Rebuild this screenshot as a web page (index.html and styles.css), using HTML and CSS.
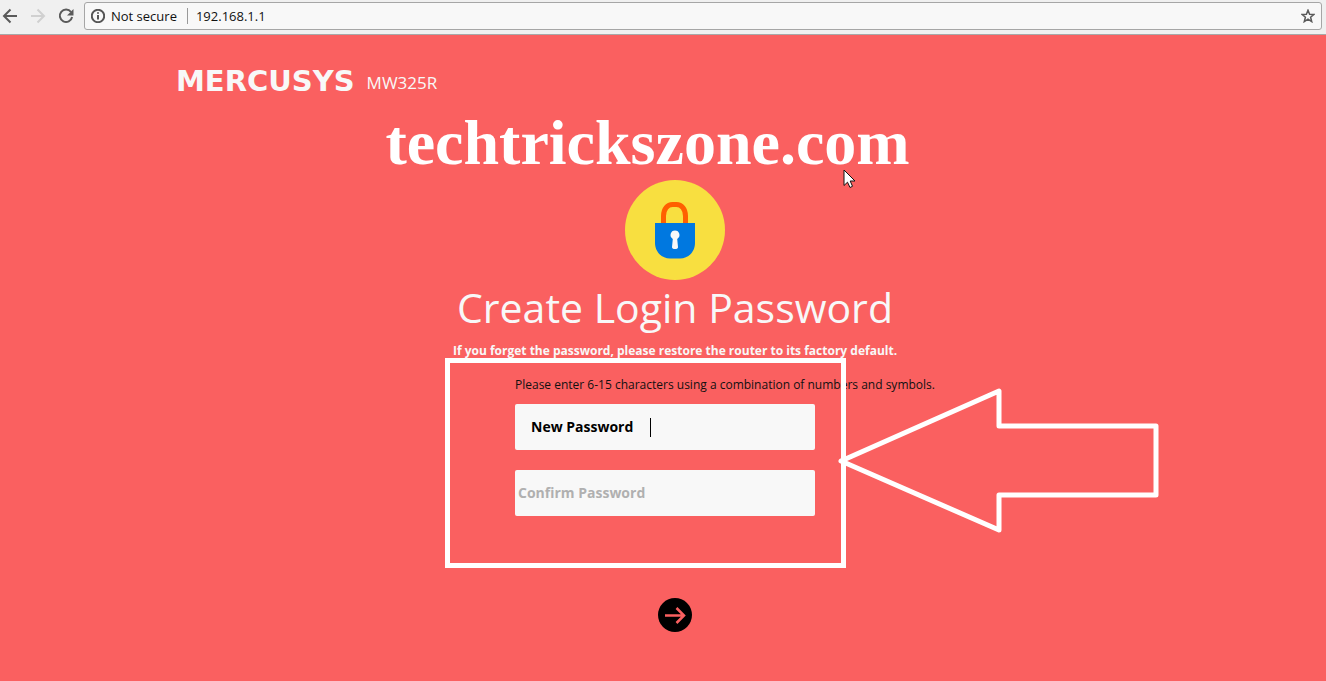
FILE: index.html
```
<!DOCTYPE html>
<html lang="en">
<head>
    <meta charset="utf-8">
    <title>MW325R</title>
    <link rel="stylesheet" href="styles.css">
</head>
<body>
    <div class="toolbar">
        <button class="nav-btn" type="button" aria-label="Back">
            <svg width="16" height="16" viewBox="0 0 16 16"><path d="M15 8H2.5M8.5 1.5L2 8l6.5 6.5"/></svg>
        </button>
        <button class="nav-btn disabled" type="button" aria-label="Forward" disabled>
            <svg width="16" height="16" viewBox="0 0 16 16"><path d="M1 8h12.5M7.500 1.500L14 8l-6.500 6.500"/></svg>
        </button>
        <button class="nav-btn" type="button" aria-label="Reload">
            <svg width="16" height="16" viewBox="0 0 16 16"><path d="M13 4A6.200 6.200 0 1 0 14.100 9"/><path class="solid" d="M15.500 1v6.500H9z"/></svg>
        </button>
        <div class="address-bar">
            <svg class="info" width="14" height="14" viewBox="0 0 14 14"><circle cx="7" cy="7" r="6.200"/><path d="M7 6v4.500M7 3.200v1.600"/></svg>
            <span class="security">Not secure</span>
            <input class="url" type="text" value="192.168.1.1" aria-label="Address">
            <button class="star" type="button" aria-label="Bookmark">
                <svg width="14" height="14" viewBox="0 0 14 14"><path d="M7 1.200l1.600 4 4.300.3-3.300 2.800 1.100 4.300L7 10.200l-3.700 2.400 1.100-4.300L1.100 5.500l4.300-.3z"/></svg>
            </button>
        </div>
    </div>

    <div class="page">
        <div class="header">
            <span class="logo">MERCUSYS</span>
            <span class="model">MW325R</span>
        </div>

        <div class="watermark">techtrickszone.com</div>

        <form class="login">
            <svg class="lock" width="100" height="100" viewBox="0 0 100 100">
                <circle cx="50" cy="50" r="50" fill="#f8df40"/>
                <path d="M38.500 45V36c0-7 4-11.500 9-11.500h4c5 0 9 4.500 9 11.500v9" fill="none" stroke="#ff5f00" stroke-width="5"/>
                <path d="M30 43h40v20c0 9-7 15.500-15 15.500H45c-8 0-15-6.500-15-15.500z" fill="#0078e0"/>
                <path d="M50 50.500a4.500 4.500 0 0 1 2.200 8.400L53 67a3 2 0 0 1-6 0l.8-8.100A4.500 4.500 0 0 1 50 50.500z" fill="#f8f8f8"/>
            </svg>
            <h1>Create Login Password</h1>
            <p class="note">If you forget the password, please restore the router to its factory default.</p>

            <div class="fields">
                <p class="hint">Please enter 6-15 characters using a combination of numbers and symbols.</p>
                <div class="field">
                    <input class="new-pwd" type="text" value="New Password" aria-label="New Password">
                    <span class="caret"></span>
                </div>
                <div class="field">
                    <input class="confirm-pwd" type="text" placeholder="Confirm Password" aria-label="Confirm Password">
                </div>
                <div class="highlight"></div>
                <svg class="arrow" width="322" height="146" viewBox="0 0 322 146">
                    <path d="M3 73L161 3v35h157v69H161v35z"/>
                </svg>
            </div>

            <button class="next" type="submit" aria-label="Next">
                <svg width="34" height="34" viewBox="0 0 34 34"><path d="M7 17.500h19M18.500 10l7.500 7.500-7.500 7.500"/></svg>
            </button>
        </form>

        <svg class="cursor" width="13" height="20" viewBox="0 0 13 20">
            <path d="M1 1v15.500l3.500-3.300L7 18.500l2.500-1.200L7.200 12H12z"/>
        </svg>
    </div>
</body>
</html>
```
FILE: styles.css
```
* {
    box-sizing: border-box;
}

body {
    margin: 0;
    min-height: 100vh;
    display: flex;
    flex-direction: column;
    background-color: #fa6060;
    color: #f8f8f8;
    font-family: "Open Sans", "Noto Sans", sans-serif;
}

button {
    padding: 0;
    border: none;
    background: none;
}

svg {
    display: block;
}

/* Browser toolbar */
.toolbar {
    display: flex;
    align-items: center;
    gap: 12px;
    height: 35px;
    padding: 0 4px 3px 2px;
    background-color: #f0f0f0;
    border-bottom: 1px solid #a8a8a8;
}

.nav-btn svg {
    fill: none;
    stroke: #5a5a5a;
    stroke-width: 2;
}

.nav-btn.disabled svg {
    stroke: #d0d0d0;
}

.nav-btn .solid {
    fill: #5a5a5a;
    stroke: none;
}

.address-bar {
    flex: 1;
    display: flex;
    align-items: center;
    height: 28px;
    margin-left: -2px;
    padding: 0 6px;
    border: 1px solid #a6a6a6;
    border-radius: 3px;
    background-color: #f8f8f8;
    color: #111111;
    font-size: 13px;
}

.info {
    fill: none;
    stroke: #555555;
    stroke-width: 2;
}

.security {
    margin-left: 6px;
    padding-right: 10px;
    border-right: 1px solid #999999;
    line-height: 16px;
}

.url {
    flex: 1;
    padding: 0 0 0 8px;
    border: none;
    background: none;
    color: #111111;
    font: inherit;
    outline: none;
}

.star svg {
    fill: none;
    stroke: #5a5a5a;
    stroke-width: 1.5;
}

/* Router page */
.page {
    flex: 1;
    position: relative;
}

.header {
    display: flex;
    align-items: center;
    gap: 12px;
    height: 92px;
    padding-left: 176px;
}

.logo {
    font-family: "DejaVu Sans", sans-serif;
    font-size: 29px;
    font-weight: bold;
}

.model {
    padding-top: 2px;
    font-size: 17px;
}

.watermark {
    position: absolute;
    top: 71px;
    left: 0;
    right: 31px;
    color: #ffffff;
    font-family: "Liberation Serif", serif;
    font-size: 64px;
    font-weight: bold;
    line-height: 74px;
    text-align: center;
}

.login {
    display: flex;
    flex-direction: column;
    align-items: center;
    padding: 53px 0 48px 24px;
}

h1 {
    margin: 0;
    font-size: 41px;
    font-weight: normal;
    line-height: 54px;
}

.note {
    margin: 8px 0 0;
    font-size: 12px;
    font-weight: bold;
    line-height: 18px;
}

.fields {
    position: relative;
    width: 320px;
    padding-top: 15px;
}

.hint {
    margin: 0 0 9px;
    color: #111111;
    font-size: 12px;
    line-height: 20px;
    white-space: nowrap;
}

.field {
    position: relative;
    width: 300px;
    margin-bottom: 20px;
}

.field input {
    display: block;
    width: 100%;
    height: 46px;
    border: none;
    border-radius: 2px;
    background-color: #f8f8f8;
    color: #000000;
    font-family: inherit;
    font-size: 14px;
    font-weight: bold;
    outline: none;
}

.field .new-pwd {
    padding: 0 16px 2px;
}

.field .confirm-pwd {
    padding: 0 3px 2px;
}

.confirm-pwd::placeholder {
    color: #b0b0b0;
    opacity: 1;
}

.caret {
    position: absolute;
    top: 14px;
    left: 135px;
    width: 1px;
    height: 19px;
    background-color: #000000;
}

/* Annotations drawn over the form */
.highlight {
    position: absolute;
    top: -2px;
    left: -70px;
    width: 401px;
    height: 210px;
    border: 5px solid #ffffff;
    pointer-events: none;
}

.arrow {
    position: absolute;
    top: 28px;
    left: 323px;
    fill: none;
    stroke: #ffffff;
    stroke-width: 5;
    stroke-linejoin: round;
}

.next {
    margin-top: 62px;
    border-radius: 50%;
    background-color: #000000;
}

.next svg {
    fill: none;
    stroke: #fa6060;
    stroke-width: 2.5;
}

.cursor {
    position: absolute;
    top: 134px;
    left: 843px;
    fill: #ffffff;
    stroke: #111111;
}
```
